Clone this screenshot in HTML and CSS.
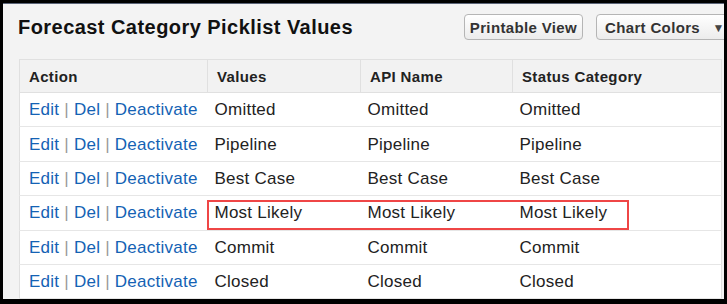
FILE: index.html
```html
<!DOCTYPE html>
<html lang="en">
<head>
    <meta charset="UTF-8">
    <meta name="viewport" content="width=device-width, initial-scale=1.0">
    <title>Forecast Category Picklist Values</title>
    <link rel="stylesheet" href="styles.css">
</head>
<body>
    <div class="page">
        <div class="page-head">
            <h2>Forecast Category Picklist Values</h2>
            <div class="tools">
                <button class="btn">Printable View</button>
                <button class="btn btn-menu">Chart Colors <span class="caret">&#9660;</span></button>
            </div>
        </div>

        <div class="list-wrap">
            <table class="list">
                <thead>
                    <tr>
                        <th class="col-action">Action</th>
                        <th class="col-value">Values</th>
                        <th class="col-api">API Name</th>
                        <th>Status Category</th>
                    </tr>
                </thead>
                <tbody>
                    <tr>
                        <td class="actions"><a href="#">Edit</a> <span class="sep">|</span> <a href="#">Del</a> <span class="sep">|</span> <a href="#">Deactivate</a></td>
                        <td>Omitted</td><td>Omitted</td><td>Omitted</td>
                    </tr>
                    <tr>
                        <td class="actions"><a href="#">Edit</a> <span class="sep">|</span> <a href="#">Del</a> <span class="sep">|</span> <a href="#">Deactivate</a></td>
                        <td>Pipeline</td><td>Pipeline</td><td>Pipeline</td>
                    </tr>
                    <tr>
                        <td class="actions"><a href="#">Edit</a> <span class="sep">|</span> <a href="#">Del</a> <span class="sep">|</span> <a href="#">Deactivate</a></td>
                        <td>Best Case</td><td>Best Case</td><td>Best Case</td>
                    </tr>
                    <tr>
                        <td class="actions"><a href="#">Edit</a> <span class="sep">|</span> <a href="#">Del</a> <span class="sep">|</span> <a href="#">Deactivate</a></td>
                        <td>Most Likely</td><td>Most Likely</td><td>Most Likely</td>
                    </tr>
                    <tr>
                        <td class="actions"><a href="#">Edit</a> <span class="sep">|</span> <a href="#">Del</a> <span class="sep">|</span> <a href="#">Deactivate</a></td>
                        <td>Commit</td><td>Commit</td><td>Commit</td>
                    </tr>
                    <tr>
                        <td class="actions"><a href="#">Edit</a> <span class="sep">|</span> <a href="#">Del</a> <span class="sep">|</span> <a href="#">Deactivate</a></td>
                        <td>Closed</td><td>Closed</td><td>Closed</td>
                    </tr>
                </tbody>
            </table>
            <!-- highlight around the Most Likely row -->
            <div class="highlight"></div>
        </div>
    </div>
</body>
</html>
```

FILE: styles.css
```css
* { margin: 0; padding: 0; box-sizing: border-box; }
body { background: #000; font-family: Arial, "Liberation Sans", sans-serif; color: #222; }
.page { width: 721px; height: 296px; margin: 3px 3px 0 3px; background: #f3f3f3; border-top: 1px solid #5b6477; overflow: hidden; padding: 10px 0 0 16px; }
.page-head { display: flex; justify-content: space-between; align-items: center; height: 26px; margin-bottom: 19px; margin-right: -4px; }
.page-head h2 { font-size: 20px; font-weight: bold; letter-spacing: 0.45px; color: #111; margin-left: -1px; }
.tools { display: flex; gap: 13px; }
.btn { height: 26px; padding: 0 5px; font-family: Arial, "Liberation Sans", sans-serif; font-size: 15px; font-weight: bold; letter-spacing: 0.35px; color: #333; background: linear-gradient(#fff, #ececec); border: 1px solid #b5b5b5; border-radius: 4px; }
.btn-menu { padding: 0 6px 0 8px; width: 132px; text-align: left; white-space: nowrap; }
.caret { font-size: 12px; color: #444; margin-left: 8px; vertical-align: 1px; }
.list-wrap { position: relative; width: 703px; }
.list { width: 100%; border-collapse: collapse; background: #fff; border: 1px solid #e0e0e0; }
.list th { height: 33px; background: #f2f2f2; font-size: 15px; font-weight: bold; letter-spacing: 0.35px; text-align: left; padding: 1px 8px 0 9px; border: 1px solid #e0e0e0; color: #222; }
.list td { height: 34.4px; font-size: 17px; letter-spacing: 0.25px; padding: 1px 8px 0 7px; border-bottom: 1px solid #e6e6e6; color: #222; white-space: nowrap; }
.list th.col-action, .list td.actions { padding-left: 9px; }
.col-action { width: 188px; }
.col-value { width: 153px; }
.col-api { width: 152px; }
.actions a { color: #1462b4; text-decoration: none; }
.actions .sep { color: #9a9a9a; }
.highlight { position: absolute; left: 188px; top: 141px; width: 422px; height: 30px; border: 2px solid #ef4646; }
```
